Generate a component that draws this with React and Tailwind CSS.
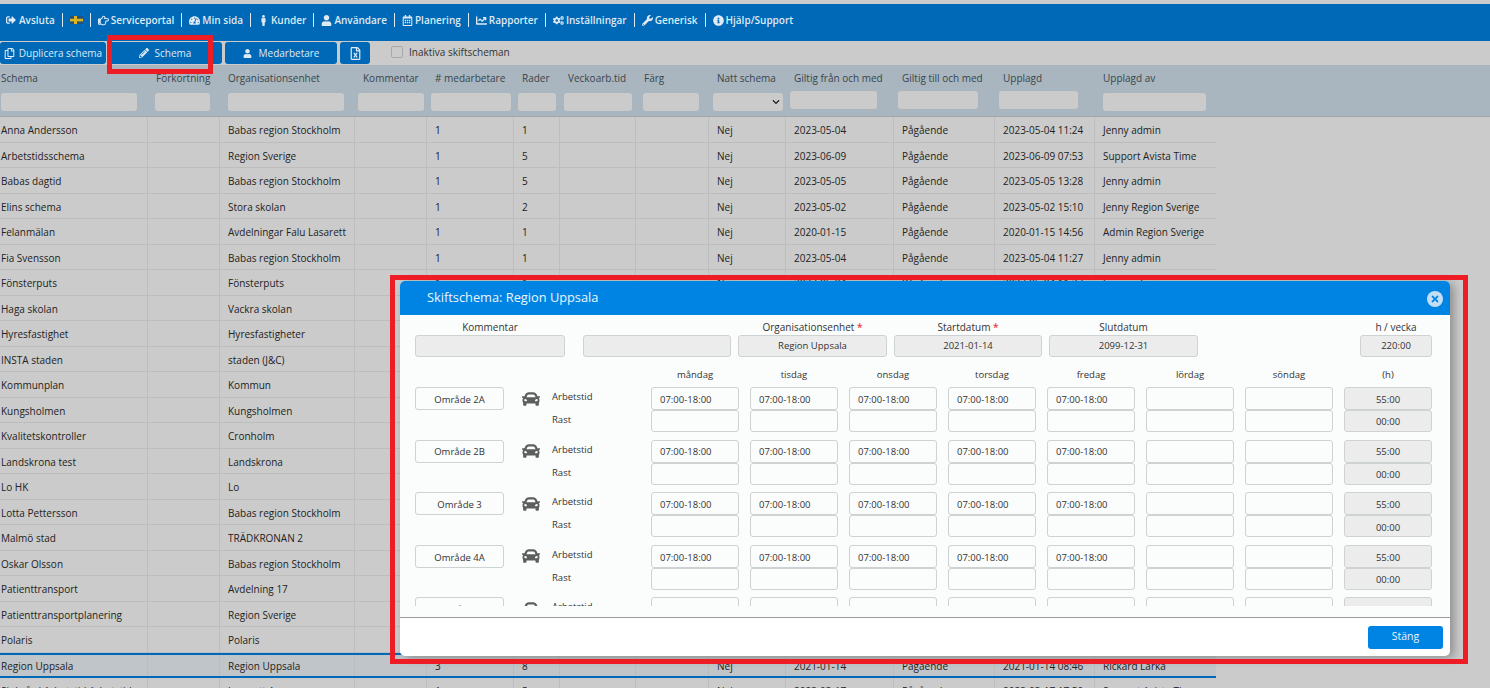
import { FaSignOutAlt, FaRegHandPointRight, FaTachometerAlt, FaMale, FaUser, FaRegCalendarAlt, FaChartLine, FaCogs, FaWrench, FaInfoCircle, FaRegCopy, FaPencilAlt, FaRegFileExcel, FaCar, FaTimes, FaChevronDown } from "react-icons/fa";

const font = "font-['Open_Sans','Noto_Sans',sans-serif]";

const navItems = [
  { icon: FaRegHandPointRight, label: "Serviceportal" },
  { icon: FaTachometerAlt, label: "Min sida" },
  { icon: FaMale, label: "Kunder" },
  { icon: FaUser, label: "Användare" },
  { icon: FaRegCalendarAlt, label: "Planering" },
  { icon: FaChartLine, label: "Rapporter" },
  { icon: FaCogs, label: "Inställningar" },
  { icon: FaWrench, label: "Generisk" },
  { icon: FaInfoCircle, label: "Hjälp/Support" },
];

const rows = [
  ["Anna Andersson", "Babas region Stockholm", "1", "1", "2023-05-04", "2023-05-04 11:24", "Jenny admin"],
  ["Arbetstidsschema", "Region Sverige", "1", "5", "2023-06-09", "2023-06-09 07:53", "Support Avista Time"],
  ["Babas dagtid", "Babas region Stockholm", "1", "5", "2023-05-05", "2023-05-05 13:28", "Jenny admin"],
  ["Elins schema", "Stora skolan", "1", "2", "2023-05-02", "2023-05-02 15:10", "Jenny Region Sverige"],
  ["Felanmälan", "Avdelningar Falu Lasarett", "1", "1", "2020-01-15", "2020-01-15 14:56", "Admin Region Sverige"],
  ["Fia Svensson", "Babas region Stockholm", "1", "1", "2023-05-04", "2023-05-04 11:27", "Jenny admin"],
  ["Fönsterputs", "Fönsterputs", "1", "1", "2023-05-04", "2023-05-04 11:27", "Jenny admin"],
  ["Haga skolan", "Vackra skolan"],
  ["Hyresfastighet", "Hyresfastigheter"],
  ["INSTA staden", "staden (J&C)"],
  ["Kommunplan", "Kommun"],
  ["Kungsholmen", "Kungsholmen"],
  ["Kvalitetskontroller", "Cronholm"],
  ["Landskrona test", "Landskrona"],
  ["Lo HK", "Lo"],
  ["Lotta Pettersson", "Babas region Stockholm"],
  ["Malmö stad", "TRÄDKRONAN 2"],
  ["Oskar Olsson", "Babas region Stockholm"],
  ["Patienttransport", "Avdelning 17"],
  ["Patienttransportplanering", "Region Sverige"],
  ["Polaris", "Polaris"],
  ["Region Uppsala", "Region Uppsala", "3", "8", "2021-01-14", "2021-01-14 08:46", "Rickard Larka"],
  ["Sjukvård Arbetstid Arbetstid", "Lasarett A", "1", "5", "2023-03-17", "2023-03-17 17:50", "Support Avista Time"],
];

const headers = [
  ["Schema", "w-[148px]", "w-[136px] ml-[1px]"],
  ["Förkortning", "w-[72px]", "w-[55px] ml-[7px]"],
  ["Organisationsenhet", "w-[135px]", "w-[116px] ml-[8px]"],
  ["Kommentar", "w-[72px]", "w-[66px] ml-[3px]"],
  ["# medarbetare", "w-[87px]", "w-[80px] ml-[4px]"],
  ["Rader", "w-[46px]", "w-[38px] ml-[4px]"],
  ["Veckoarb.tid", "w-[76px]", "w-[68px] ml-[4px]"],
  ["Färg", "w-[73px]", "w-[56px] ml-[7px]"],
  ["Natt schema", "w-[77px]", "w-[70px] ml-[4px]"],
  ["Giltig från och med", "w-[108px]", "w-[87px] ml-[4px] -mt-[2px]"],
  ["Giltig till och med", "w-[101px]", "w-[80px] ml-[4px] -mt-[2px]"],
  ["Upplagd", "w-[100px]", "w-[79px] ml-[4px] -mt-[2px]"],
  ["Upplagd av", "w-[121px]", "w-[103px] ml-[8px]"],
];

const cellWidths = ["w-[148px]", "w-[72px]", "w-[135px]", "w-[72px]", "w-[87px]", "w-[46px]", "w-[76px]", "w-[73px]", "w-[77px]", "w-[108px]", "w-[101px]", "w-[100px]", "w-[121px]"];

const days = ["måndag", "tisdag", "onsdag", "torsdag", "fredag", "lördag", "söndag"];
const areas = ["Område 2A", "Område 2B", "Område 3", "Område 4A", "Område 5"];

function Cell({ width, children }) {
  return (
    <div className={`${width} flex h-full shrink-0 items-center overflow-hidden whitespace-nowrap border-r border-[#bdbdbd] pl-2 pt-[3px] first:pl-[1px] last:border-r-0`}>
      {children}
    </div>
  );
}

function Row({ row, selected }) {
  const [name, org, count = "1", lines = "1", from = "", added = "", by = ""] = row;
  const values = [name, "", org, "", count, lines, "", "", "Nej", from, "Pågående", added, by];
  return (
    <div className={`flex w-[1216px] items-center ${selected ? "h-[25px] border-y-2 border-[#0069b7] bg-[#c0c5c9]" : "h-[25.5px] border-b border-[#bdbdbd]"}`}>
      {values.map((v, i) => (
        <Cell key={i} width={cellWidths[i]}>{v}</Cell>
      ))}
    </div>
  );
}

function Box({ grey, className = "", children }) {
  return (
    <div className={`flex items-center justify-center rounded-[3px] border border-[#cfd2d2] text-[9.5px] text-[#333] ${grey ? "bg-[#ececec]" : "bg-[#fbfcfc]"} ${className}`}>
      {children}
    </div>
  );
}

function ShiftRow({ area, last }) {
  return (
    <div className="flex h-[52.6px] shrink-0">
      <Box className="h-[23px] w-[89px] pt-[3px]">{area}</Box>
      <div className="flex h-[23px] w-[48px] shrink-0 items-center justify-center pl-[6px] text-[18px] text-[#5e5e5e]">
        <FaCar />
      </div>
      <div className="flex w-[99px] shrink-0 flex-col text-[9.5px] text-[#333]">
        <div className="h-[23px] leading-[20px]">Arbetstid</div>
        <div className="h-[22px] leading-[20px]">Rast</div>
      </div>
      <div className="grid grid-cols-[88px_88px_88px_88px_88px_88px_88px_88px] gap-x-[11px]">
        {[0, 1, 2, 3, 4, 5, 6].map((d) => (
          <div key={d} className="flex flex-col">
            <Box className="h-[23px] !justify-start pl-2 pt-[3px]">{d < 5 && !last ? "07:00-18:00" : ""}</Box>
            <Box className="h-[22px]" />
          </div>
        ))}
        <div className="flex flex-col">
          <Box grey className="h-[23px] pt-[3px]">{last ? "" : "55:00"}</Box>
          <Box grey className="h-[22px] pt-[3px]">{last ? "" : "00:00"}</Box>
        </div>
      </div>
    </div>
  );
}

function Field({ label, required, value, className }) {
  return (
    <div className={`flex shrink-0 flex-col items-center ${className}`}>
      <div className="h-[12px] text-[10px] leading-[10px] text-[#333]">
        {label}
        {required && <span className="text-[#e11]"> *</span>}
      </div>
      <Box grey className="mt-[1px] h-[22px] w-full">{value}</Box>
    </div>
  );
}

function NavDivider() {
  return <div className="mx-[7px] h-[14px] w-px bg-[#dfeaf4]" />;
}

export default function App() {
  return (
    <div className={`${font} relative h-[688px] w-[1490px] overflow-hidden bg-[#cbcbcb] text-[10px] text-[#222]`}>
      <div className="mt-[4px] flex h-[37px] items-center bg-[#0069b7] pb-[5px] pl-[6px] text-[10px] font-semibold text-[#dfeaf4]">
        <div className="flex items-center gap-[3px]">
          <FaSignOutAlt className="text-[10px]" />
          Avsluta
        </div>
        <NavDivider />
        <svg width="13" height="8" viewBox="0 0 13 8">
          <rect width="13" height="8" fill="#24527a" />
          <rect x="4" width="3" height="8" fill="#dcb420" />
          <rect y="2.8" width="13" height="2.6" fill="#dcb420" />
        </svg>
        <NavDivider />
        {navItems.map(({ icon: Icon, label }, i) => (
          <div key={label} className="flex items-center">
            <div className="flex items-center gap-[2px]">
              <Icon className="text-[11px]" />
              {label}
            </div>
            {i < navItems.length - 1 && <NavDivider />}
          </div>
        ))}
      </div>

      <div className="flex h-[24px] items-center text-[10px]">
        <div className="flex h-[22px] w-[106px] items-center justify-center gap-1 rounded-[3px] bg-[#0069b7] text-[#dfeaf4]">
          <FaRegCopy className="text-[11px]" /> Duplicera schema
        </div>
        <div className="ml-[2px] flex h-[22px] w-[114px] items-center justify-center gap-[6px] rounded-[3px] bg-[#0069b7] text-[#dfeaf4]">
          <FaPencilAlt className="text-[10px]" /> Schema
        </div>
        <div className="ml-[3px] flex h-[22px] w-[112px] items-center justify-center gap-[7px] rounded-[3px] bg-[#0069b7] text-[#dfeaf4]">
          <FaUser className="text-[9px]" /> Medarbetare
        </div>
        <div className="ml-[3px] flex h-[22px] w-[30px] items-center justify-center rounded-[3px] bg-[#0069b7] text-[13px] text-[#dfeaf4]">
          <FaRegFileExcel />
        </div>
        <div className="mb-[2px] ml-[21px] h-[12px] w-[12px] rounded-[2px] border border-[#a8a8a8] bg-[#cbcbcb]" />
        <div className="mb-[2px] ml-[6px] text-[#333]">Inaktiva skiftscheman</div>
      </div>

      <div className="flex h-[52px] border-b border-[#a6a6a6] bg-[#a9b6bf] text-[10px] font-medium text-[#3a444b]">
        {headers.map(([label, w, iw], i) => (
          <div key={label} className={`${w} shrink-0`}>
            <div className={`h-[28px] whitespace-nowrap leading-[26px] ${i > 0 ? "pl-[8px]" : "pl-[1px]"}`}>{label}</div>
            <div className={`${iw} flex h-[18px] items-center justify-end rounded-[3px] bg-[#cbcbcb] pr-[3px]`}>
              {i === 8 && <FaChevronDown className="text-[8px] text-[#222]" />}
            </div>
          </div>
        ))}
      </div>

      <div>
        {rows.map((row) => (
          <Row key={row[0]} row={row} selected={row[0] === "Region Uppsala"} />
        ))}
      </div>

      {/* dialogruta */}
      <div className="absolute left-[400px] top-[281px] flex h-[375px] w-[1050px] flex-col overflow-hidden rounded-[5px] bg-white shadow-[4px_2px_10px_rgba(0,0,0,0.3)]">
        <div className="flex h-[34px] shrink-0 items-center justify-between bg-[#0084e3] pl-[27px] pr-[7px] text-[12.8px] text-[#eaf4fc]">
          Skiftschema: Region Uppsala
          <div className="mt-[2px] flex h-[16px] w-[16px] items-center justify-center rounded-full bg-[#c4dff5] text-[10px] text-[#0084e3]">
            <FaTimes />
          </div>
        </div>
        <div className="h-[302px] shrink-0 bg-[#fbfcfc]">
          <div className="flex h-[291px] flex-col overflow-hidden pl-[15px] pt-[7px]">
            <div className="flex h-[39px] shrink-0">
              <Field label="Kommentar" className="w-[150px]" />
              <Field label="&nbsp;" className="ml-[18px] w-[148px]" />
              <Field label="Organisationsenhet" required value="Region Uppsala" className="ml-[7px] w-[149px]" />
              <Field label="Startdatum" required value="2021-01-14" className="ml-[7px] w-[148px]" />
              <Field label="Slutdatum" value="2099-12-31" className="ml-[7px] w-[149px]" />
              <Field label="h / vecka" value="220:00" className="ml-[162px] w-[72px]" />
            </div>
            <div className="flex h-[26px] shrink-0 items-center pl-[236px] pt-[2px] text-[9.5px] text-[#333]">
              <div className="grid grid-cols-[88px_88px_88px_88px_88px_88px_88px_88px] gap-x-[11px] text-center">
                {days.map((d) => <div key={d}>{d}</div>)}
                <div>(h)</div>
              </div>
            </div>
            {areas.map((a, i) => <ShiftRow key={a} area={a} last={i === areas.length - 1} />)}
          </div>
        </div>
        <div className="flex flex-1 items-center justify-end border-t border-[#9a9a9a] pr-[7px]">
          <div className="flex h-[23px] w-[75px] items-center justify-center rounded-[3px] bg-[#0084e3] text-[10.5px] text-[#eaf4fc]">Stäng</div>
        </div>
      </div>

      {/* roda ramar */}
      <div className="absolute left-[107px] top-[35px] h-[39px] w-[106px] border-[5px] border-[#ee1c25]" />
      <div className="absolute left-[390px] top-[275px] h-[389px] w-[1078px] border-[5px] border-[#ee1c25]" />
    </div>
  );
}
